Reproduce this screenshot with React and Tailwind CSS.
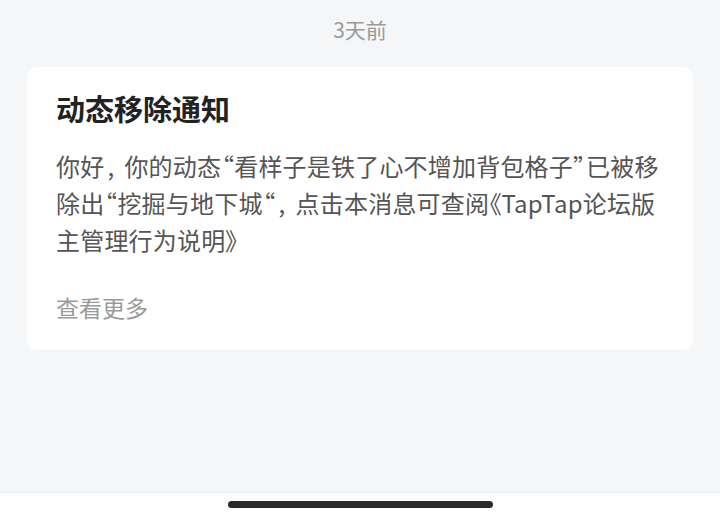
export default function App() {
  return (
    <div
      className="w-[720px] h-[520px] bg-[#f5f6f8] flex flex-col"
      style={{ fontFamily: '"Noto Sans CJK SC", "Noto Sans", sans-serif' }}
    >
      {/* time */}
      <div className="h-[60px] flex items-center justify-center text-[21px] text-[#9a9a9a]">
        3天前
      </div>

      {/* notice card */}
      <div className="mx-[27px] mt-[7px] bg-white rounded-[10px] px-[29px] pt-[24px] pb-[24px]">
        <div className="h-[34px] leading-[34px] text-[29px] font-bold text-[#222]">
          动态移除通知
        </div>
        <div className="mt-[22px] text-[24px] leading-[37px] text-[#555] whitespace-nowrap tracking-[0.2px] [font-feature-settings:'palt']">
          <div>
            你好<span className="inline-block w-[20px] pl-[3px] text-left">,</span>你的动态<span className="inline-block w-[13px] text-center">“</span>看样子是铁了心不增加背包格子<span className="inline-block w-[13px] text-center">”</span>已被移
          </div>
          <div>
            除出<span className="inline-block w-[13px] text-center">“</span>挖掘与地下城<span className="inline-block w-[13px] text-center">“</span><span className="inline-block w-[20px] pl-[3px] text-left">,</span>点击本消息可查阅《TapTap论坛版
          </div>
          <div>主管理行为说明》</div>
        </div>
        <div className="mt-[31px] text-[23px] leading-[37px] text-[#9a9a9a]">
          查看更多
        </div>
      </div>

      <div className="flex-1" />

      {/* home indicator */}
      <div className="h-[28px] bg-white border-t border-[#e9eaec] flex justify-center pt-[8px]">
        <div className="w-[265px] h-[7px] rounded-full bg-[#2a2a2a]" />
      </div>
    </div>
  );
}
